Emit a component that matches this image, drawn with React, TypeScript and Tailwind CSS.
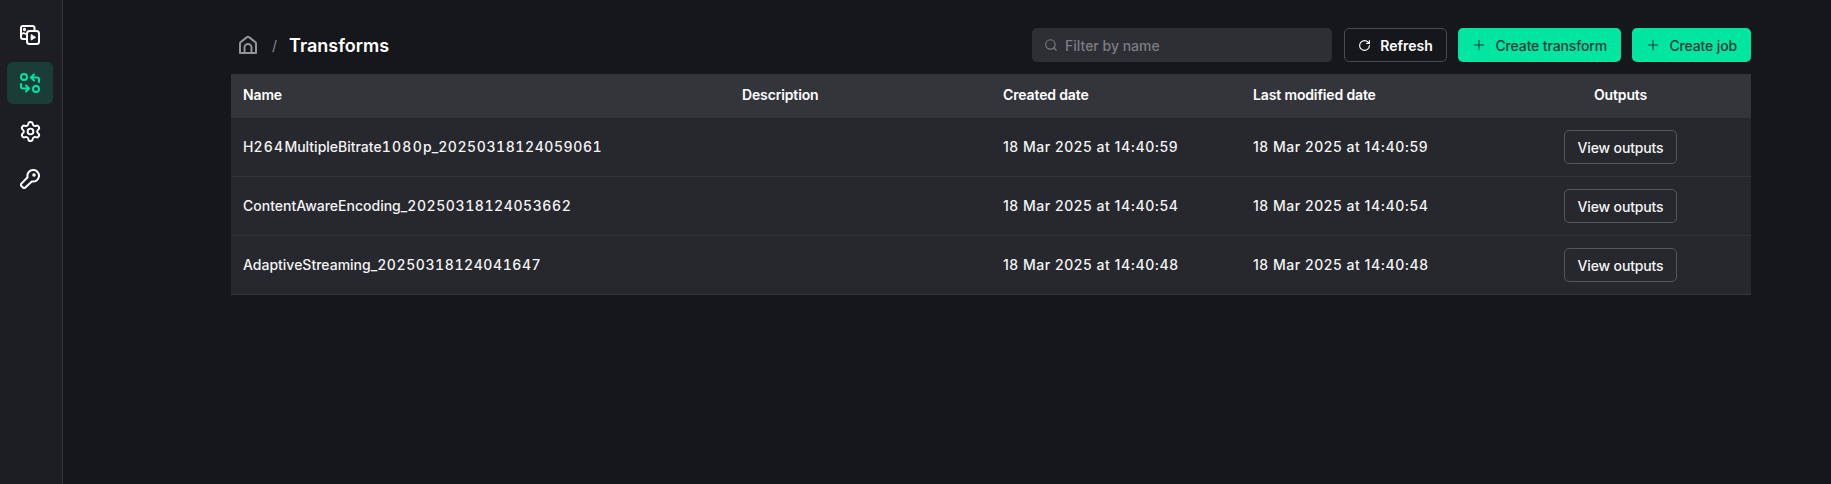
import React from "react";
import { Plus, RotateCw, Search, Settings } from "lucide-react";

const rows = [
  { name: "H264MultipleBitrate1080p_20250318124059061", created: "18 Mar 2025 at 14:40:59", modified: "18 Mar 2025 at 14:40:59" },
  { name: "ContentAwareEncoding_20250318124053662", created: "18 Mar 2025 at 14:40:54", modified: "18 Mar 2025 at 14:40:54" },
  { name: "AdaptiveStreaming_20250318124041647", created: "18 Mar 2025 at 14:40:48", modified: "18 Mar 2025 at 14:40:48" },
];

function MediaIcon() {
  return (
    <svg width="20" height="20" viewBox="0 0 20 20" fill="none" stroke="currentColor" strokeWidth="2" strokeLinecap="round" strokeLinejoin="round">
      <path d="M6 14H3A2 2 0 0 1 1 12V3A2 2 0 0 1 3 1H12.5A2 2 0 0 1 14.5 3V5.5" />
      <rect x="7" y="6" width="12" height="13" rx="2.5" />
      <path d="M1 9.5 3.5 8 6 9" strokeWidth="1.6" />
      <circle cx="4.5" cy="4.5" r="0.7" />
      <path d="M11.2 10v5l4-2.5z" fill="currentColor" strokeWidth="1" />
    </svg>
  );
}

function TransformIcon() {
  return (
    <svg width="20" height="20" viewBox="0 0 20 20" fill="none" stroke="currentColor" strokeWidth="2" strokeLinecap="round" strokeLinejoin="round">
      <circle cx="4" cy="4" r="3" />
      <circle cx="16" cy="16" r="3" />
      <path d="M19 9V6.5A2 2 0 0 0 17 4.5H11" />
      <path d="M14 1.5 11 4.5 14 7.5" />
      <path d="M1 11V13.5A2 2 0 0 0 3 15.5H9" />
      <path d="M6 12.5 9 15.5 6 18.5" />
    </svg>
  );
}

function KeyIcon() {
  return (
    <svg width="20" height="20" viewBox="0 0 20 20" fill="none" stroke="currentColor" strokeWidth="2" strokeLinecap="round" strokeLinejoin="round">
      <path d="M7.6 8.2 1.4 14.6A1.6 1.6 0 0 0 1.4 17L2.9 18.5A1.6 1.6 0 0 0 5.3 18.5L11.8 12.4A5.8 5.8 0 1 0 7.6 8.2Z" />
      <circle cx="14" cy="6" r="0.8" fill="currentColor" />
    </svg>
  );
}

function HomeIcon() {
  return (
    <svg width="20" height="20" viewBox="0 0 20 20" fill="none" stroke="currentColor" strokeWidth="2" strokeLinecap="round" strokeLinejoin="round">
      <path d="M2 18V8.5A1.8 1.8 0 0 1 2.7 7.1L9 2.1A1.6 1.6 0 0 1 11 2.1L17.3 7.1A1.8 1.8 0 0 1 18 8.5V18Z" />
      <path d="M6.5 18V12.5A3.5 3.5 0 0 1 13.5 12.5V18" />
    </svg>
  );
}

// digits in the names sit wider than the letters
function WideDigits({ text }: { text: string }) {
  return (
    <>
      {text.split(/(\d+)/).map((part, i) => {
        if (i % 2 === 0) return <span key={i}>{part}</span>;
        return part.length < 5 ? (
          <span key={i} className="tabular-nums tracking-[1.25px]">{part}</span>
        ) : (
          <span key={i} className="tabular-nums tracking-[0.58px]">{part}</span>
        );
      })}
    </>
  );
}

export default function App() {
  return (
    <div className="flex h-[484px] bg-[#16171b] font-['Inter','Liberation_Sans',sans-serif] text-[#f4f4f5] overflow-hidden">
      {/* Sidebar */}
      <div className="w-[63px] shrink-0 bg-[#1d1e23] border-r border-[#33343a] flex flex-col items-start pl-[7px] pt-[14px] gap-[6px]">
        <div className="w-[46px] h-[42px] flex items-center justify-center text-white"><MediaIcon /></div>
        <div className="w-[46px] h-[42px] flex items-center justify-center rounded-[6px] bg-[#1a3d37] text-[#00e5a0]"><TransformIcon /></div>
        <div className="w-[46px] h-[42px] flex items-center justify-center text-white"><Settings size={23} strokeWidth={2} /></div>
        <div className="w-[46px] h-[42px] flex items-center justify-center text-white"><KeyIcon /></div>
      </div>

      {/* Main */}
      <div className="flex-1 pl-[168px] pr-[80px] pt-[28px]">
        <div className="flex items-center h-[34px] mb-[12px]">
          <div className="flex items-center text-[#8f949b] pl-[7px]"><HomeIcon /></div>
          <span className="ml-[14px] text-[#8a8c92] text-[14px]">/</span>
          <span className="ml-[12px] text-[18px] font-semibold text-white">Transforms</span>

          <div className="ml-auto flex items-center gap-[11px]">
            <div className="w-[300px] h-[34px] mr-[1px] rounded-[5px] bg-[#2e2f34] flex items-center pl-[12px] gap-[7px] text-[#7b7d83] text-[14px] font-medium">
              <Search size={14} strokeWidth={2} />
              <span>Filter by name</span>
            </div>
            <button className="w-[103px] h-[34px] rounded-[5px] border border-[#4a4b50] flex items-center justify-center gap-[9px] text-[14px] font-semibold text-white">
              <RotateCw size={13} strokeWidth={2} />
              <span>Refresh</span>
            </button>
            <button className="w-[163px] h-[34px] rounded-[5px] bg-[#00e5a0] flex items-center justify-end pr-[14px] gap-[8px] text-[14px] font-medium tracking-[-0.01em] text-[#1d3d36]">
              <Plus size={16} strokeWidth={1.6} />
              <span>Create transform</span>
            </button>
            <button className="w-[119px] h-[34px] rounded-[5px] bg-[#00e5a0] flex items-center justify-end pr-[14px] gap-[8px] text-[14px] font-medium tracking-[-0.01em] text-[#1d3d36]">
              <Plus size={16} strokeWidth={1.6} />
              <span>Create job</span>
            </button>
          </div>
        </div>

        <table className="w-[1520px] table-fixed border-separate border-spacing-0 text-[14px]">
          <colgroup>
            <col className="w-[499px]" />
            <col className="w-[260px]" />
            <col className="w-[250px]" />
            <col className="w-[250px]" />
            <col className="w-[261px]" />
          </colgroup>
          <thead>
            <tr className="h-[44px] bg-[#34353b] text-left text-white">
              <th className="pl-[12px] pb-[3px] font-semibold tracking-[-0.01em]">Name</th>
              <th className="pl-[12px] pb-[3px] font-semibold tracking-[-0.01em]">Description</th>
              <th className="pl-[13px] pb-[3px] font-semibold tracking-[-0.01em]">Created date</th>
              <th className="pl-[13px] pb-[3px] font-semibold tracking-[-0.01em]">Last modified date</th>
              <th className="pb-[3px] text-center font-semibold tracking-[-0.01em]">Outputs</th>
            </tr>
          </thead>
          <tbody>
            {rows.map((r) => (
              <tr key={r.name} className="h-[59px] bg-[#27282d] font-medium text-[#f4f4f5]">
                <td className="pl-[12px] pb-[1px] border-b border-[#34353a]"><WideDigits text={r.name} /></td>
                <td className="border-b border-[#34353a]" />
                <td className="pl-[13px] pb-[1px] border-b border-[#34353a] tracking-[0.55px]">{r.created}</td>
                <td className="pl-[13px] pb-[1px] border-b border-[#34353a] tracking-[0.55px]">{r.modified}</td>
                <td className="text-center border-b border-[#34353a]">
                  <button className="w-[113px] h-[34px] rounded-[5px] border border-[#55565b] text-[14px] font-medium tracking-[-0.01em] text-[#f4f4f5]">View outputs</button>
                </td>
              </tr>
            ))}
          </tbody>
        </table>
      </div>
    </div>
  );
}
